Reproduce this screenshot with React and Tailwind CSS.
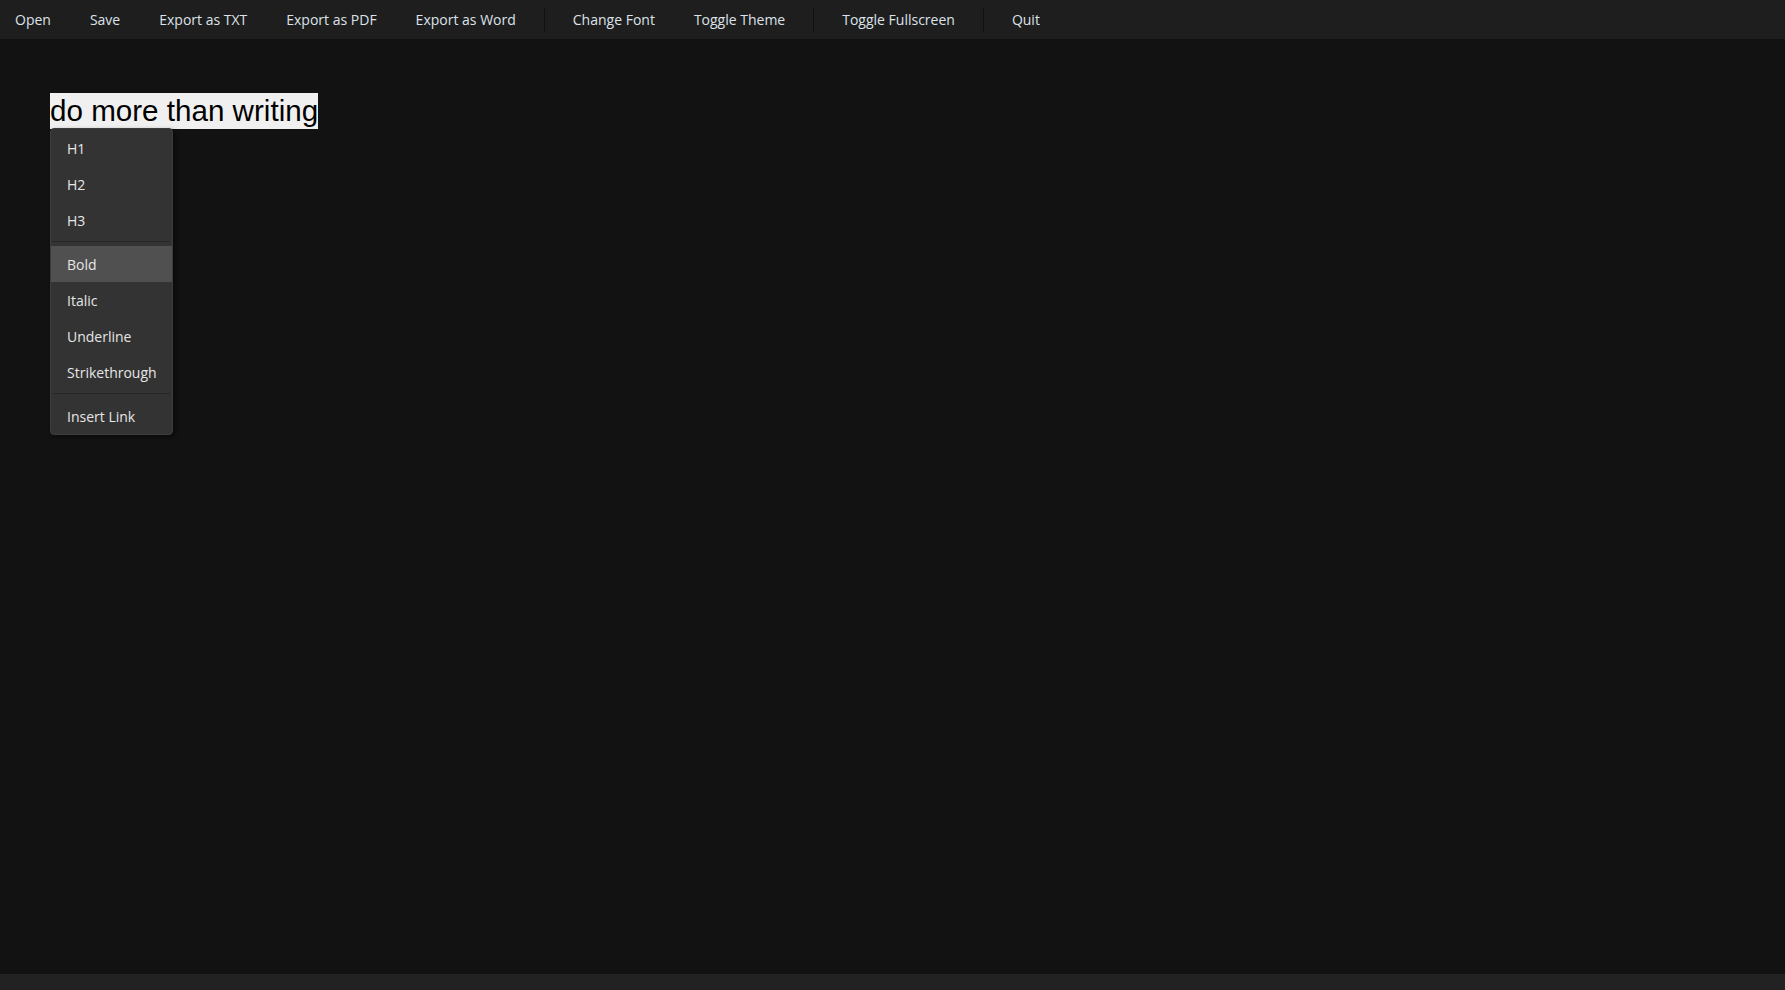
import React from 'react'

const menuBar = [
  ['Open', 'Save', 'Export as TXT', 'Export as PDF', 'Export as Word'],
  ['Change Font', 'Toggle Theme'],
  ['Toggle Fullscreen'],
  ['Quit'],
]

const formatGroups = [
  ['H1', 'H2', 'H3'],
  ['Bold', 'Italic', 'Underline', 'Strikethrough'],
  ['Insert Link'],
]

function TopBar() {
  return (
    <div className="flex h-[39px] shrink-0 items-center gap-[9px] bg-[#1e1e1e] font-['Open_Sans',sans-serif] text-[14px] text-[#dde2ea]">
      {menuBar.map((group, gi) => (
        <React.Fragment key={gi}>
          {gi > 0 && <div className="mx-[4px] h-[24px] w-px bg-[#111111]" />}
          {group.map((label) => (
            <button key={label} className="px-[15px] leading-[39px] whitespace-nowrap">
              {label}
            </button>
          ))}
        </React.Fragment>
      ))}
    </div>
  )
}

function FormatMenu({ active }) {
  return (
    <div className="absolute left-0 top-[35px] w-[123px] rounded-[4px] border border-[#3d3d3d] bg-[#333333] pt-px font-['Open_Sans',sans-serif] text-[14px] text-[#e6e6e6] shadow-[2px_2px_4px_rgba(0,0,0,0.5)]">
      {formatGroups.map((group, gi) => (
        <React.Fragment key={gi}>
          {gi > 0 && <div className="mx-[2px] mb-[4px] mt-[3px] h-px bg-[#272727]" />}
          {group.map((label) => (
            <div
              key={label}
              className={
                'flex h-[36px] items-center pl-[16px] ' +
                (label === active ? 'bg-[#505050]' : '')
              }
            >
              {label}
            </div>
          ))}
        </React.Fragment>
      ))}
    </div>
  )
}

export default function App() {
  return (
    <div className="flex h-screen flex-col bg-[#121212]">
      <TopBar />
      <div className="flex-1 pl-[50px] pt-[54px]">
        <div className="relative inline-block">
          <span className="inline-block bg-[#f0f0f0] font-['Liberation_Sans',Arial,sans-serif] text-[29.6px] leading-[36px] text-black">
            do more than writing
          </span>
          <FormatMenu active="Bold" />
        </div>
      </div>
      <div className="h-[16px] shrink-0 bg-[#222222]" />
    </div>
  )
}
